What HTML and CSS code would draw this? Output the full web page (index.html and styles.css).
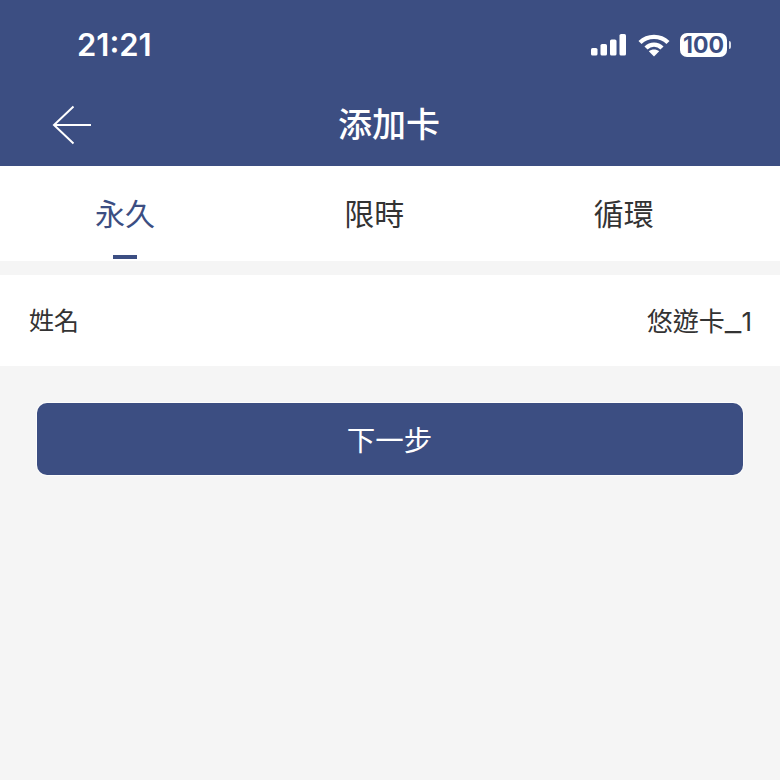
FILE: index.html
```html
<!DOCTYPE html>
<html lang="zh-Hant">
<head>
<meta charset="utf-8">
<title>添加卡</title>
<link rel="stylesheet" href="styles.css">
</head>
<body>
<header class="header">
  <div class="status">
    <span class="time">21:21</span>
    <div class="status-icons">
      <svg class="signal" width="37" height="24" viewBox="0 0 37 24"><rect x="1" y="15" width="6.5" height="7.5" rx="1.6"/><rect x="10.5" y="11" width="6.5" height="11.5" rx="1.6"/><rect x="20" y="6.5" width="6.5" height="16" rx="1.6"/><rect x="29.500" y="1" width="6.5" height="21.500" rx="1.6"/></svg>
      <svg class="wifi" width="32" height="24" viewBox="0 0 32 24"><path class="wifi-arc" d="M2 9.500C9.800 2 22.200 2 30 9.500"/><path class="wifi-arc" d="M8 15C12.500 10.500 19.500 10.500 24 15"/><path class="wifi-dot" d="M16 23.500L10.800 18.300C13.700 15.900 18.300 15.900 21.200 18.300Z"/></svg>
      <div class="battery"><span class="battery-body">100</span><span class="battery-cap"></span></div>
    </div>
  </div>
  <div class="nav">
    <svg class="back" width="40" height="40" viewBox="0 0 40 40"><path d="M39 20H2M21.500 1.500L2 20l19.500 18.500"/></svg>
    <h1 class="title">添加卡</h1>
  </div>
</header>
<nav class="tabs">
  <div class="tab active">永久</div>
  <div class="tab">限時</div>
  <div class="tab">循環</div>
</nav>
<section class="row">
  <span>姓名</span>
  <span class="value">悠遊卡<span class="underscore">_</span>1</span>
</section>
<button class="next" type="button">下一步</button>
</body>
</html>
```
FILE: styles.css
```css
* { box-sizing: border-box; }
html, body { margin: 0; padding: 0; }
body {
  width: 780px;
  height: 780px;
  overflow: hidden;
  background: #f5f5f5;
  font-family: "Inter", "Noto Sans CJK TC", sans-serif;
  color: #333;
}
.header { height: 166px; background: #3c4e82; color: #fff; }
.status {
  height: 86px;
  padding: 26px 49px 0 77px;
  display: flex;
  justify-content: space-between;
  align-items: flex-start;
}
.time { font-size: 31px; line-height: 37px; font-weight: 600; }
.status-icons { display: flex; align-items: center; gap: 9px; padding-top: 7px; }
.signal { margin-right: 2px; }
.signal rect { fill: #fff; }
.wifi-arc { fill: none; stroke: #fff; stroke-width: 4.4; }
.wifi-dot { fill: #fff; }
.battery { display: flex; align-items: center; gap: 2px; margin-left: 1px; }
.battery-body {
  width: 47px;
  height: 24px;
  border-radius: 7px;
  background: #fff;
  color: #3c4e82;
  font-size: 23px;
  font-weight: 700;
  line-height: 24px;
  text-align: center;
}
.battery-cap { width: 2px; height: 8px; background: #fff; border-radius: 0 2px 2px 0; opacity: .8; }
.nav { height: 80px; position: relative; display: flex; justify-content: center; align-items: center; }
.back { position: absolute; left: 52px; top: 19px; }
.back path { fill: none; stroke: #fff; stroke-width: 2; }
.title {
  margin: 0;
  font-size: 34px;
  font-weight: 500;
  line-height: 46px;
  position: relative;
  top: -1px;
  left: -1px;
}
.tabs { height: 95px; background: #fff; display: flex; }
.tab {
  width: 249.500px;
  flex: none;
  font-size: 30px;
  line-height: 42px;
  padding-top: 27px;
  padding-right: 1px;
  text-align: center;
  position: relative;
}
.tab:first-child { width: 250px; padding-right: 0; }
.active { color: #3c4e82; }
.active::after {
  content: "";
  position: absolute;
  left: 113px;
  top: 89px;
  width: 24px;
  height: 4px;
  background: #3c4e82;
}
.row {
  margin-top: 14px;
  height: 91px;
  background: #fff;
  padding: 0 28px 4px 29px;
  display: flex;
  justify-content: space-between;
  align-items: center;
  font-size: 25px;
}
.value { font-size: 26px; }
.underscore { font-size: 37px; font-weight: 300; line-height: 1; }
.next {
  display: block;
  margin: 37px 0 0 37px;
  width: 706px;
  height: 72px;
  border: 0;
  border-radius: 10px;
  background: #3c4e82;
  box-shadow: 0 0 0 1px rgba(255,255,255,.65);
  color: #fff;
  font-family: inherit;
  font-size: 28.5px;
  line-height: 40px;
  padding: 3px 1px 0 0;
}
```
